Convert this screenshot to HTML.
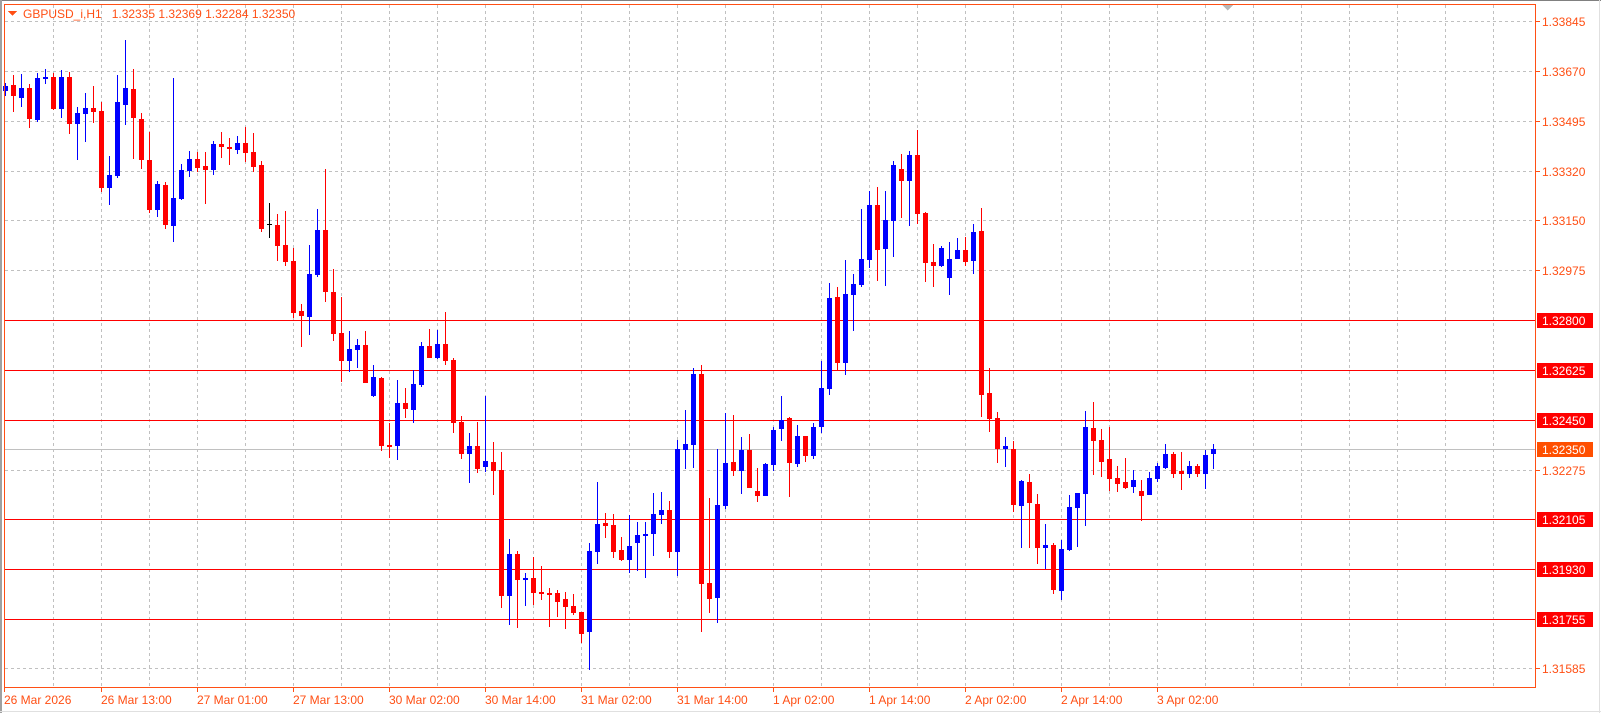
<!DOCTYPE html>
<html><head><meta charset="utf-8"><style>
html,body{margin:0;padding:0;background:#fff;width:1601px;height:713px;overflow:hidden}
svg{display:block}
text{font-family:"Liberation Sans",Tahoma,sans-serif;font-size:12px}
</style></head><body>
<svg width="1601" height="713" viewBox="0 0 1601 713" xmlns="http://www.w3.org/2000/svg" shape-rendering="crispEdges">
<rect x="0" y="0" width="1601" height="713" fill="#fff"/>
<path d="M0 0.5H1601" stroke="#808080" stroke-width="1"/>
<path d="M0.5 0V713M1.5 0V713" stroke="#a0a0a0"/>
<path d="M1599.5 0V713M0 711.5H1601" stroke="#e0e0e0"/>
<g stroke="#c0c0c0" stroke-dasharray="3 3" stroke-width="1">
<path d="M53.5 5V687M101.5 5V687M149.5 5V687M197.5 5V687M245.5 5V687M293.5 5V687M341.5 5V687M389.5 5V687M437.5 5V687M485.5 5V687M533.5 5V687M581.5 5V687M629.5 5V687M677.5 5V687M725.5 5V687M773.5 5V687M821.5 5V687M869.5 5V687M917.5 5V687M965.5 5V687M1013.5 5V687M1061.5 5V687M1109.5 5V687M1157.5 5V687M1205.5 5V687M1253.5 5V687M1301.5 5V687M1349.5 5V687M1397.5 5V687M1445.5 5V687M1493.5 5V687"/>
<path d="M5 21.5H1536M5 71.5H1536M5 121.5H1536M5 171.5H1536M5 220.5H1536M5 270.5H1536M5 470.5H1536M5 668.5H1536"/>
</g>
<path d="M5 449.5H1536" stroke="#c0c0c0"/>
<path d="M5 320.5H1536M5 370.5H1536M5 420.5H1536M5 519.5H1536M5 569.5H1536M5 619.5H1536" stroke="#ff0000"/>
<path stroke="#0000ff" fill="none" d="M5.5 83V96M21.5 74V107M37.5 73V122M45.5 69V84M61.5 70V118M77.5 107V160M85.5 93V142M109.5 156V205M117.5 75V178M125.5 40V125M157.5 181V217M173.5 78V242M181.5 164V200M189.5 151V177M213.5 141V175M237.5 136V154M309.5 245V335M317.5 209V277M349.5 331V372M357.5 339V368M373.5 365V397M397.5 380V460M413.5 370V423M421.5 342V387M437.5 330V359M469.5 433V483M485.5 396V472M509.5 539V625M525.5 573V606M589.5 543V670M597.5 482V564M629.5 515V573M637.5 522V571M645.5 522V578M653.5 493V556M661.5 492V524M677.5 440V576M685.5 410V469M693.5 368V468M717.5 449V623M725.5 413V509M741.5 437V494M765.5 463V496M773.5 427V471M781.5 396V441M797.5 425V467M813.5 423V459M821.5 361V433M829.5 283V395M845.5 260V375M853.5 274V331M861.5 209V287M869.5 191V268M885.5 191V286M893.5 161V257M909.5 151V226M941.5 246V267M949.5 242V295M957.5 238V259M973.5 224V274M1005.5 437V467M1021.5 480V548M1045.5 524V569M1061.5 540V600M1069.5 495V551M1077.5 493V547M1085.5 411V526M1133.5 470V493M1149.5 472V495M1157.5 463V482M1165.5 444V469M1189.5 461V478M1205.5 450V489M1213.5 444V469"/>
<path fill="#0000ff" d="M3 86h5v5h-5zM19 88h5v10h-5zM35 78h5v42h-5zM43 77h5v2h-5zM59 77h5v32h-5zM75 113h5v11h-5zM83 108h5v6h-5zM107 175h5v13h-5zM115 102h5v74h-5zM123 88h5v17h-5zM155 184h5v26h-5zM171 198h5v28h-5zM179 170h5v29h-5zM187 159h5v12h-5zM211 144h5v26h-5zM235 143h5v7h-5zM307 274h5v43h-5zM315 230h5v45h-5zM347 349h5v12h-5zM355 345h5v5h-5zM371 377h5v19h-5zM395 403h5v43h-5zM411 384h5v26h-5zM419 346h5v39h-5zM435 344h5v14h-5zM467 446h5v8h-5zM483 461h5v6h-5zM507 554h5v42h-5zM523 578h5v2h-5zM587 551h5v81h-5zM595 524h5v28h-5zM627 546h5v14h-5zM635 535h5v8h-5zM643 534h5v2h-5zM651 514h5v20h-5zM659 510h5v5h-5zM675 449h5v103h-5zM683 444h5v6h-5zM691 374h5v71h-5zM715 505h5v93h-5zM723 463h5v43h-5zM739 450h5v21h-5zM763 464h5v32h-5zM771 430h5v35h-5zM779 420h5v9h-5zM795 436h5v28h-5zM811 427h5v29h-5zM819 388h5v39h-5zM827 298h5v91h-5zM843 294h5v69h-5zM851 284h5v11h-5zM859 259h5v26h-5zM867 205h5v55h-5zM883 220h5v29h-5zM891 165h5v56h-5zM907 155h5v26h-5zM939 248h5v18h-5zM947 259h5v19h-5zM955 250h5v9h-5zM971 232h5v29h-5zM1003 446h5v3h-5zM1019 481h5v25h-5zM1043 545h5v3h-5zM1059 549h5v42h-5zM1067 507h5v43h-5zM1075 493h5v15h-5zM1083 427h5v67h-5zM1131 480h5v7h-5zM1147 478h5v17h-5zM1155 466h5v13h-5zM1163 454h5v14h-5zM1187 466h5v8h-5zM1203 455h5v19h-5zM1211 449h5v5h-5z"/>
<path stroke="#ff0000" fill="none" d="M13.5 75V112M29.5 84V128M53.5 73V110M69.5 72V134M93.5 86V123M101.5 102V192M133.5 69V159M141.5 113V169M149.5 132V213M165.5 182V229M197.5 152V172M205.5 152V204M221.5 132V158M229.5 138V165M245.5 127V162M253.5 133V172M261.5 161V232M277.5 214V261M285.5 211V266M293.5 248V318M301.5 304V347M325.5 169V302M333.5 269V341M341.5 297V382M365.5 331V383M381.5 377V451M389.5 423V458M405.5 388V418M429.5 329V358M445.5 312V365M453.5 358V433M461.5 416V459M477.5 422V473M493.5 442V495M501.5 452V608M517.5 551V628M533.5 557V605M541.5 566V600M549.5 588V627M557.5 590V617M565.5 592V629M573.5 594V615M581.5 612V643M605.5 513V538M613.5 514V558M621.5 537V561M669.5 501V558M701.5 365V632M709.5 498V613M733.5 415V476M749.5 434V488M757.5 468V502M789.5 417V497M805.5 436V462M837.5 287V370M877.5 187V281M901.5 154V218M917.5 130V224M925.5 212V282M933.5 244V287M965.5 237V266M981.5 208V417M989.5 368V432M997.5 412V463M1013.5 441V512M1029.5 474V548M1037.5 494V564M1053.5 543V594M1093.5 402V475M1101.5 429V477M1109.5 427V491M1117.5 466V492M1125.5 458V489M1141.5 480V521M1173.5 452V478M1181.5 452V490M1197.5 464V477"/>
<path fill="#ff0000" d="M11 85h5v11h-5zM27 88h5v31h-5zM51 77h5v32h-5zM67 77h5v47h-5zM91 108h5v4h-5zM99 111h5v77h-5zM131 89h5v29h-5zM139 119h5v41h-5zM147 160h5v50h-5zM163 185h5v40h-5zM195 159h5v9h-5zM203 166h5v4h-5zM219 144h5v3h-5zM227 147h5v2h-5zM243 143h5v10h-5zM251 152h5v15h-5zM259 165h5v64h-5zM275 225h5v21h-5zM283 245h5v17h-5zM291 261h5v52h-5zM299 311h5v5h-5zM323 230h5v62h-5zM331 292h5v42h-5zM339 333h5v28h-5zM363 345h5v38h-5zM379 378h5v68h-5zM387 445h5v2h-5zM403 403h5v6h-5zM427 346h5v12h-5zM443 344h5v17h-5zM451 360h5v63h-5zM459 422h5v32h-5zM475 446h5v23h-5zM491 462h5v9h-5zM499 470h5v126h-5zM515 554h5v26h-5zM531 578h5v15h-5zM539 592h5v2h-5zM547 593h5v2h-5zM555 593h5v9h-5zM563 599h5v8h-5zM571 606h5v7h-5zM579 612h5v22h-5zM603 523h5v3h-5zM611 525h5v27h-5zM619 550h5v10h-5zM667 510h5v42h-5zM699 374h5v210h-5zM707 583h5v16h-5zM731 462h5v9h-5zM747 450h5v38h-5zM755 491h5v5h-5zM787 418h5v45h-5zM803 436h5v20h-5zM835 297h5v66h-5zM875 205h5v45h-5zM899 169h5v12h-5zM915 155h5v59h-5zM923 213h5v50h-5zM931 262h5v4h-5zM963 250h5v12h-5zM979 231h5v164h-5zM987 393h5v26h-5zM995 418h5v31h-5zM1011 449h5v56h-5zM1027 482h5v21h-5zM1035 504h5v44h-5zM1051 545h5v45h-5zM1091 428h5v13h-5zM1099 440h5v22h-5zM1107 459h5v20h-5zM1115 478h5v6h-5zM1123 482h5v6h-5zM1139 491h5v5h-5zM1171 454h5v20h-5zM1179 471h5v3h-5zM1195 466h5v8h-5z"/>
<path stroke="#000" d="M269.5 203V238M267 224.5H272"/>
<path d="M4.5 4.5H1535.5V687.5H4.5Z" fill="none" stroke="#ff4f14"/>
<path stroke="#ff4f14" d="M1536 21.5h4M1536 71.5h4M1536 121.5h4M1536 171.5h4M1536 220.5h4M1536 270.5h4M1536 470.5h4M1536 668.5h4M4.5 687V692M101.5 687V692M197.5 687V692M293.5 687V692M389.5 687V692M485.5 687V692M581.5 687V692M677.5 687V692M773.5 687V692M869.5 687V692M965.5 687V692M1061.5 687V692M1157.5 687V692"/>
<path d="M8 11h9l-4.5 5z" fill="#ff4f14"/>
<text x="23" y="18" fill="#ff4f14">GBPUSD_i,H1&#160;&#160;&#160;1.32335&#160;1.32369&#160;1.32284&#160;1.32350</text>
<path d="M1222 5h11l-5.5 5.5z" fill="#b8b8b8"/>
<g fill="#ff4f14">
<text x="1542" y="26">1.33845</text>
<text x="1542" y="76">1.33670</text>
<text x="1542" y="126">1.33495</text>
<text x="1542" y="176">1.33320</text>
<text x="1542" y="225">1.33150</text>
<text x="1542" y="275">1.32975</text>
<text x="1542" y="475">1.32275</text>
<text x="1542" y="673">1.31585</text>
</g>
<g fill="#ff0000">
<rect x="1537" y="313" width="56" height="15"/>
<rect x="1537" y="363" width="56" height="15"/>
<rect x="1537" y="413" width="56" height="15"/>
<rect x="1537" y="512" width="56" height="15"/>
<rect x="1537" y="562" width="56" height="15"/>
<rect x="1537" y="612" width="56" height="15"/>
</g>
<rect x="1537" y="442" width="56" height="15" fill="#ff4f00"/>
<g fill="#fff">
<text x="1542" y="325">1.32800</text>
<text x="1542" y="375">1.32625</text>
<text x="1542" y="425">1.32450</text>
<text x="1542" y="454">1.32350</text>
<text x="1542" y="524">1.32105</text>
<text x="1542" y="574">1.31930</text>
<text x="1542" y="624">1.31755</text>
</g>
<g fill="#ff4f14">
<text x="4" y="704">26 Mar 2026</text>
<text x="101" y="704">26 Mar 13:00</text>
<text x="197" y="704">27 Mar 01:00</text>
<text x="293" y="704">27 Mar 13:00</text>
<text x="389" y="704">30 Mar 02:00</text>
<text x="485" y="704">30 Mar 14:00</text>
<text x="581" y="704">31 Mar 02:00</text>
<text x="677" y="704">31 Mar 14:00</text>
<text x="773" y="704">1 Apr 02:00</text>
<text x="869" y="704">1 Apr 14:00</text>
<text x="965" y="704">2 Apr 02:00</text>
<text x="1061" y="704">2 Apr 14:00</text>
<text x="1157" y="704">3 Apr 02:00</text>
</g>
</svg>
</body></html>
